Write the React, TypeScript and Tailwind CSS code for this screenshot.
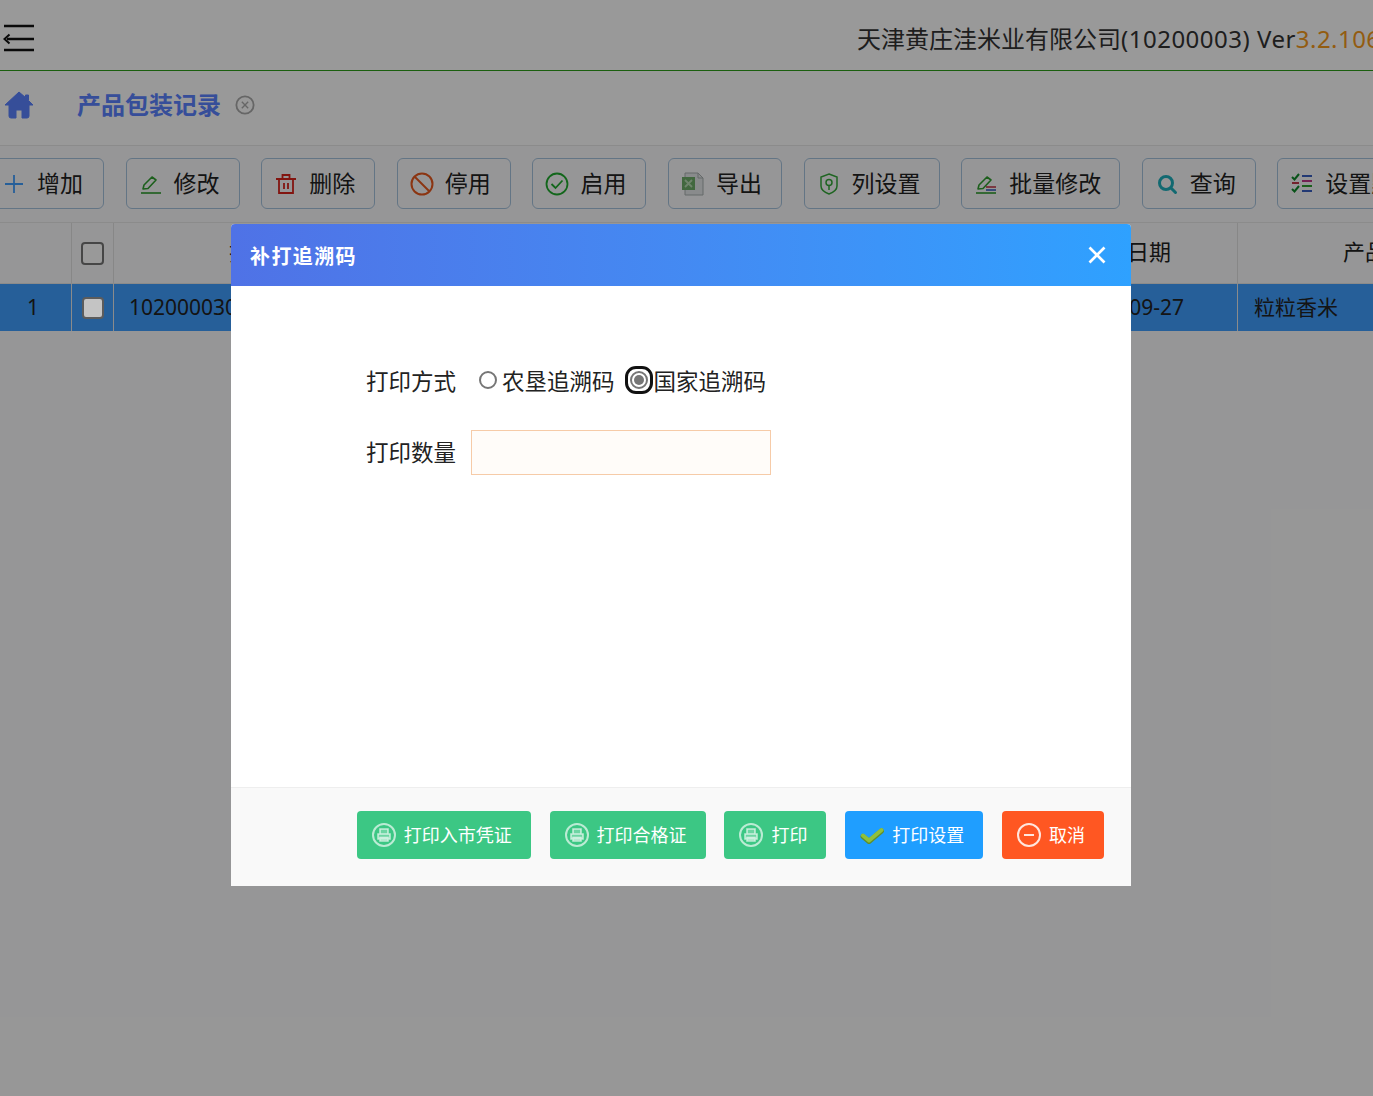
import React from 'react';

const Pencil = ({ bars }: { bars?: boolean }) => (
  <svg width="22" height="22" viewBox="0 0 22 22" fill="none" strokeWidth="1.6">
    <path d="M3 16l1-4 8-8 4 3-8 8.500z" stroke="#2f9e2f" strokeLinejoin="round" />
    {bars ? (
      <>
        <path d="M11 14h10" stroke="#c23a4a" />
        <path d="M11 17h10" stroke="#3a5fc2" />
        <path d="M1 20h20" stroke="#2f9e2f" />
      </>
    ) : (
      <path d="M1 20h20" stroke="#2f9e2f" />
    )}
  </svg>
);

const Trash = () => (
  <svg width="22" height="22" viewBox="0 0 22 22" fill="none" stroke="#d9231c" strokeWidth="1.8">
    <path d="M1 6h20M4 6v14h14V6M7.500 6V2h7v4M9 10v6M13 10v6" />
  </svg>
);

const Ban = () => (
  <svg width="24" height="24" viewBox="0 0 24 24" fill="none" stroke="#e8591f" strokeWidth="2">
    <circle cx="12" cy="12" r="10.500" />
    <path d="M4.500 4.500l15 15" />
  </svg>
);

const CheckCircle = () => (
  <svg width="24" height="24" viewBox="0 0 24 24" fill="none" stroke="#1faa2e" strokeWidth="1.800">
    <circle cx="12" cy="12" r="10.500" />
    <path d="M6.500 12l4 4 7-7.500" />
  </svg>
);

const Excel = () => (
  <svg width="24" height="24" viewBox="0 0 24 24" fill="none">
    <path d="M4 1h13l5 5v17H4z" fill="#e4e8ea" stroke="#a8b0b0" />
    <path d="M17 1v5h5" stroke="#a8b0b0" />
    <rect x="1" y="5" width="13" height="13" fill="#6fae6a" />
    <path d="M4 8l7 7M11 8l-7 7" stroke="#b9dcb5" strokeWidth="1.800" />
  </svg>
);

const Shield = () => (
  <svg width="20" height="22" viewBox="0 0 20 22" fill="none" stroke="#35a83a" strokeWidth="1.500">
    <path d="M10 1l8 3v9c0 4-4 6.500-8 8-4-1.500-8-4-8-8V4z" />
    <circle cx="10" cy="9.500" r="3" />
    <path d="M10 12.500V17" />
  </svg>
);

const Search = () => (
  <svg width="22" height="22" viewBox="0 0 22 22" fill="none" stroke="#1fb0bd" strokeWidth="3">
    <circle cx="10" cy="10" r="6.500" />
    <path d="M15 15l4.500 4.500" strokeLinecap="round" />
  </svg>
);

const Checklist = () => (
  <svg width="22" height="22" viewBox="0 0 22 22" fill="none" strokeWidth="2">
    <path d="M1 4l2.500 2.500L8 1M1 16l2.500 2.500L8 13" stroke="#0f8a2a" />
    <path d="M1 10h7" stroke="#c23a4a" />
    <path d="M11 3h10" stroke="#3a5fc2" />
    <path d="M11 8h10" stroke="#c23a8a" />
    <path d="M11 13h10" stroke="#2f9e2f" />
    <path d="M11 18h10" stroke="#3a5fc2" />
  </svg>
);

const PrintIcon = () => (
  <svg width="24" height="24" viewBox="0 0 24 24" fill="none" stroke="#ffffff" strokeOpacity="0.65">
    <circle cx="12" cy="12" r="11" strokeWidth="2" />
    <path d="M8 11V6h8v5M6 11h12v5H6zM8 14.500h8V18H8z" strokeWidth="1.600" fill="#ffffff" fillOpacity="0.25" />
  </svg>
);

const tools = [
  { label: '修改', w: 'w-[114px]', icon: <Pencil /> },
  { label: '删除', w: 'w-[114px]', icon: <Trash /> },
  { label: '停用', w: 'w-[114px]', icon: <Ban /> },
  { label: '启用', w: 'w-[114px]', icon: <CheckCircle /> },
  { label: '导出', w: 'w-[114px]', icon: <Excel /> },
  { label: '列设置', w: 'w-[136px]', icon: <Shield /> },
  { label: '批量修改', w: 'w-[159px]', icon: <Pencil bars /> },
  { label: '查询', w: 'w-[114px]', icon: <Search /> },
  { label: '设置默认', w: 'w-[159px]', icon: <Checklist /> },
];

const footerBtn = 'flex items-center gap-[8px] h-[48px] pl-[15px] pr-[19px] rounded-[4px]';

export default function App() {
  return (
    <div className="relative w-[1373px] h-[1096px] overflow-hidden bg-[#fbfbfc] text-[#222] font-['Noto_Sans','Noto_Sans_CJK_SC',sans-serif]">
      <header className="flex items-center h-[71px] pt-[6px] border-b border-[#2e9e1a] bg-white">
        <svg className="ml-[3px] shrink-0" width="32" height="28" viewBox="0 0 32 28" fill="none" stroke="#111" strokeWidth="2.500">
          <path d="M1 2h30M4 15h27M1 26h30" />
          <path d="M6.500 10.500L1.500 15l5 4.500" strokeWidth="2" />
        </svg>
        <div className="ml-[822px] mt-[2px] text-[24px] whitespace-nowrap text-[#333]">
          天津黄庄洼米业有限公司<span className="tracking-[0.5px]">(10200003) Ver</span>
          <span className="text-[#f59a1c] tracking-[0.45px]">3.2.106</span>
        </div>
      </header>

      <div className="flex items-center h-[75px] pb-[6px] border-b border-[#e8e8e8] bg-white">
        <svg className="ml-[4px]" width="30" height="30" viewBox="0 0 30 30" fill="#5a82ff" stroke="#5a82ff" strokeLinejoin="round">
          <path d="M15 2L1 15h4v11a2 2 0 0 0 2 2h5v-8h6v8h5a2 2 0 0 0 2-2V15h4l-4.500-4.500V5h-3v2.500z" />
        </svg>
        <span className="ml-[43px] text-[24px] font-bold text-[#5a82ff]">产品包装记录</span>
        <svg className="ml-[14px]" width="20" height="20" viewBox="0 0 22 22" fill="none" stroke="#aaa" strokeWidth="2">
          <circle cx="11" cy="11" r="9.500" />
          <path d="M7.500 7.500l7 7M14.500 7.500l-7 7" strokeWidth="1.500" />
        </svg>
      </div>

      <div className="flex items-start gap-[21.6px] h-[76px] pt-[12px] -ml-[10px] whitespace-nowrap">
        <button className="flex items-center shrink-0 w-[114px] h-[51px] pl-[13px] rounded-[6px] border border-[#a6c3de] text-[23px]">
          <svg width="20" height="20" viewBox="0 0 20 20" stroke="#409eff" strokeWidth="1.800">
            <path d="M10 1v18M1 10h18" />
          </svg>
          <span className="ml-[13px]">增加</span>
        </button>
        {tools.map((t) => (
          <button key={t.label} className={`flex items-center shrink-0 ${t.w} h-[51px] pl-[12px] rounded-[6px] border border-[#a6c3de] text-[23px]`}>
            <span className="flex justify-center w-[24px]">{t.icon}</span>
            <span className="ml-[11px]">{t.label}</span>
          </button>
        ))}
      </div>

      <div className="flex h-[62px] border-y border-[#e8e8e8] text-[22px] items-center bg-[#fbfbfc]">
        <div className="w-[72px] h-full border-r border-[#e2e2e2]" />
        <div className="flex items-center justify-center w-[42px] h-full border-r border-[#e2e2e2]">
          <span className="w-[23px] h-[23px] rounded-[4px] border-2 border-[#767676] bg-white" />
        </div>
        <div className="flex-1 pl-[115px] pb-[3px]">批次号</div>
        <div className="w-[135px] h-full flex items-center justify-end pr-[66px] pb-[3px] border-r border-[#e2e2e2]">日期</div>
        <div className="w-[135px] pl-[105px] pb-[3px] whitespace-nowrap">产品名称</div>
      </div>

      <div className="flex items-center h-[47px] bg-[#409eff] text-[21px] whitespace-nowrap">
        <div className="w-[72px] h-full flex items-center justify-center border-r border-[#e8e8e8] pr-[5px]">1</div>
        <div className="flex items-center justify-center w-[42px] h-full border-r border-[#e8e8e8]">
          <span className="relative z-10 w-[22px] h-[22px] rounded-[4px] border-2 border-[#5c5c5c] bg-[#c4c4c4]" />
        </div>
        <div className="flex-1 pl-[15px] pt-[1px]">102000030</div>
        <div className="w-[135px] h-full flex items-center justify-end pr-[53px] pt-[1px] border-r border-[#e8e8e8]">2023-09-27</div>
        <div className="w-[135px] pl-[16px] pt-[1px]">粒粒香米</div>
      </div>

      <div className="absolute inset-0 bg-black/40" />

      <div className="absolute left-[231px] top-[224px] z-20 flex flex-col w-[900px] h-[662px] rounded-t-[4px] bg-white overflow-hidden">
        <div className="flex items-center justify-between h-[62px] px-[24px] pl-[19px] bg-gradient-to-r from-[#4f72e6] to-[#2ea1ff] text-white">
          <span className="pt-[4px] text-[20px] font-bold tracking-[1.4px]">补打追溯码</span>
          <svg width="20" height="20" viewBox="0 0 20 20" stroke="#fff" strokeWidth="2.700">
            <path d="M2.500 2.500l15 15M17.500 2.500l-15 15" />
          </svg>
        </div>

        <div className="flex-1 pl-[135px] pt-[73px] text-[22.5px] text-[#222]">
          <div className="flex items-center h-[45px]">
            <span className="w-[113px]">打印方式</span>
            <span className="mb-[4px] w-[18px] h-[18px] rounded-full border-2 border-[#767676] bg-white" />
            <span className="ml-[5px]">农垦追溯码</span>
            <span className="flex items-center justify-center mb-[4px] ml-[10px] w-[28px] h-[28px] rounded-[11px] border-[3px] border-[#111]">
              <span className="flex items-center justify-center w-[18px] h-[18px] rounded-full border-2 border-[#767676]">
                <span className="w-[10px] h-[10px] rounded-full bg-[#767676]" />
              </span>
            </span>
            <span className="ml-[1px]">国家追溯码</span>
          </div>
          <div className="flex items-center mt-[26px]">
            <span className="w-[105px]">打印数量</span>
            <input className="w-[300px] h-[45px] border border-[#f6cba8] bg-[#fffcf9]" />
          </div>
        </div>

        <div className="flex items-start justify-end gap-[18.800px] h-[99px] pt-[23px] pr-[27px] border-t border-[#eee] bg-[#f9f9f9] text-[18px] text-white">
          <button className={`${footerBtn} bg-[#3cc784]`}><PrintIcon />打印入市凭证</button>
          <button className={`${footerBtn} bg-[#3cc784]`}><PrintIcon />打印合格证</button>
          <button className={`${footerBtn} bg-[#3cc784]`}><PrintIcon />打印</button>
          <button className={`${footerBtn} bg-[#1f9eff]`}>
            <svg width="24" height="24" viewBox="0 0 24 24" fill="none" strokeLinejoin="round" strokeLinecap="round">
              <path d="M3 13.500l6 5L21.500 8" stroke="#5f8f2c" strokeWidth="5" />
              <path d="M3 12.500l6 5L21.500 7" stroke="#8fc03c" strokeWidth="4" />
            </svg>
            打印设置
          </button>
          <button className={`${footerBtn} bg-[#ff5722]`}>
            <svg width="24" height="24" viewBox="0 0 24 24" fill="none" stroke="#fff" strokeOpacity="0.85" strokeWidth="2">
              <circle cx="12" cy="12" r="11" />
              <path d="M7 12h10" />
            </svg>
            取消
          </button>
        </div>
      </div>
    </div>
  );
}
